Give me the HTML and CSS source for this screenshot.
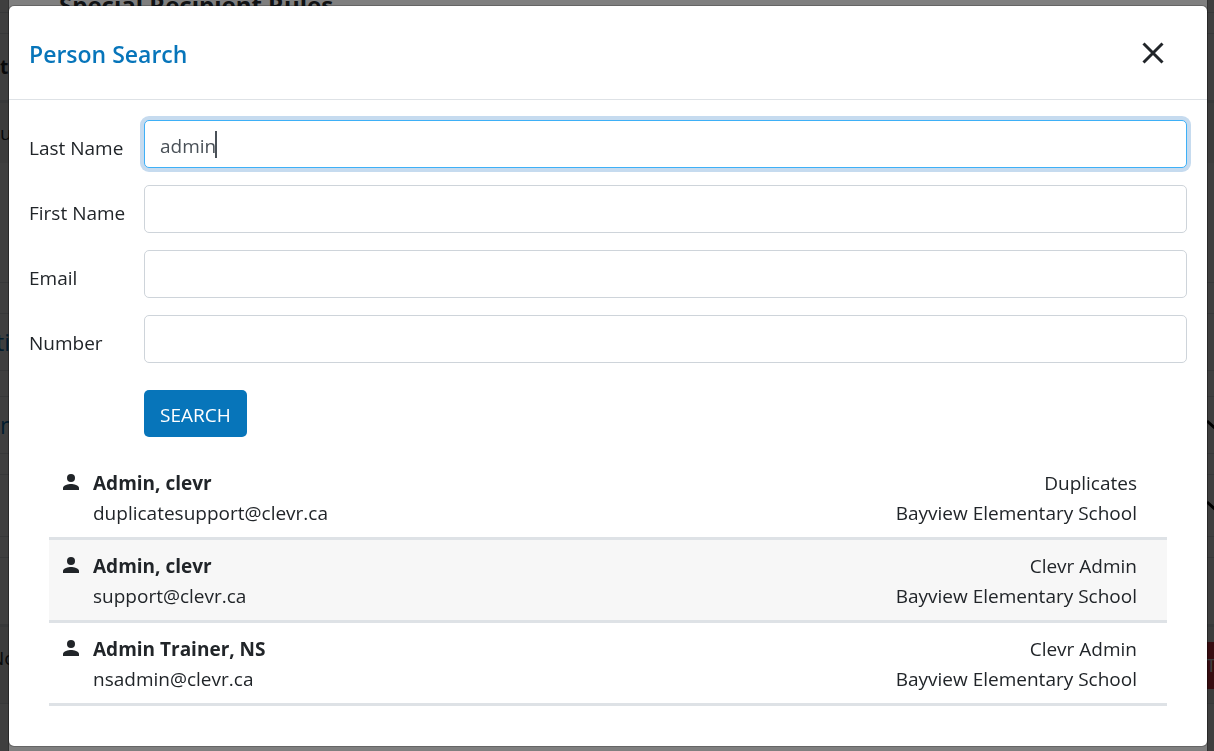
FILE: index.html
```html
<!DOCTYPE html>
<html lang="en">
<head>
	<meta charset="UTF-8">
	<title>Person Search</title>
	<link rel="stylesheet" href="styles.css">
</head>
<body>

	<!-- page behind the dialogs -->
	<div class="page" aria-hidden="true">
		<div class="row row-xs"></div>
		<div class="row row-sm"></div>
		<div class="row row-head"><b>t</b></div>
		<div class="row row-alt">u</div>
		<div class="row row-tall"></div>
		<div class="row row-md"></div>
		<div class="row row-link"><span class="cut-sm">ti</span></div>
		<div class="row row-gap"></div>
		<div class="row row-link"><span>n</span>
			<svg class="chevron" viewBox="0 0 14 14"><path d="M1 3l10 9"/></svg>
		</div>
		<div class="row row-sm"></div>
		<div class="row row-item">
			<svg class="chevron" viewBox="0 0 14 14"><path d="M1 3l10 9"/></svg>
		</div>
		<div class="row row-sm"></div>
		<div class="row row-head"></div>
		<div class="row row-foot"><span class="cut">No</span><span class="btn-red">T</span></div>
	</div>
	<div class="dimmed"></div>

	<!-- first dialog -->
	<div class="under" aria-hidden="true">
		<div class="under-title">Special Recipient Rules</div>
	</div>
	<div class="dimmed"></div>

	<!-- person search dialog -->
	<div class="modal-wrap">
		<div class="modal" role="dialog" aria-labelledby="modal-title">
			<div class="modal-header">
				<h1 id="modal-title">Person Search</h1>
				<button type="button" class="btn-close" aria-label="Close">
					<svg viewBox="0 0 22 22"><path d="M1.5 1.5l19 19M20.5 1.5l-19 19"/></svg>
				</button>
			</div>

			<form class="search-form">
				<div class="field">
					<label for="last-name">Last Name</label>
					<div class="control is-focused">
						<input type="text" id="last-name" value="admin">
						<span class="caret"></span>
					</div>
				</div>
				<div class="field">
					<label for="first-name">First Name</label>
					<div class="control"><input type="text" id="first-name"></div>
				</div>
				<div class="field">
					<label for="email">Email</label>
					<div class="control"><input type="text" id="email"></div>
				</div>
				<div class="field">
					<label for="number">Number</label>
					<div class="control"><input type="text" id="number"></div>
				</div>
				<button type="button" class="btn-search">SEARCH</button>
			</form>

			<ul class="results">
				<li>
					<svg class="person" viewBox="0 0 16 16"><circle cx="8" cy="4" r="4"/><path d="M0 16v-2c0-2.700 5.300-4 8-4s8 1.300 8 4v2z"/></svg>
					<div class="who"><b>Admin, clevr</b><span>duplicatesupport@clevr.ca</span></div>
					<div class="where"><span>Duplicates</span><span>Bayview Elementary School</span></div>
				</li>
				<li>
					<svg class="person" viewBox="0 0 16 16"><circle cx="8" cy="4" r="4"/><path d="M0 16v-2c0-2.700 5.300-4 8-4s8 1.300 8 4v2z"/></svg>
					<div class="who"><b>Admin, clevr</b><span>support@clevr.ca</span></div>
					<div class="where"><span>Clevr Admin</span><span>Bayview Elementary School</span></div>
				</li>
				<li>
					<svg class="person" viewBox="0 0 16 16"><circle cx="8" cy="4" r="4"/><path d="M0 16v-2c0-2.700 5.300-4 8-4s8 1.300 8 4v2z"/></svg>
					<div class="who"><b>Admin Trainer, NS</b><span>nsadmin@clevr.ca</span></div>
					<div class="where"><span>Clevr Admin</span><span>Bayview Elementary School</span></div>
				</li>
			</ul>
		</div>
	</div>

</body>
</html>
```
FILE: styles.css
```css
*{ box-sizing: border-box; }
body{
	margin: 0;
	overflow: hidden;
	font-family: "Open Sans", "Noto Sans", sans-serif;
	font-size: 19px;
	line-height: 30px;
	color: #212529;
}
h1, ul{ margin: 0; padding: 0; }
ul{ list-style: none; }
input, button{ font: inherit; }

/* page behind */
.page{
	position: fixed;
	top: 0;
	left: 0;
	width: 100%;
	height: 100%;
	overflow: hidden;
	background: #fff;
}
.row{
	display: flex;
	align-items: center;
	justify-content: space-between;
	border-bottom: 1px solid #dee2e6;
}
.row-xs{ height: 13px; }
.row-sm{ height: 21px; }
.row-gap{ height: 26px; }
.row-md{ height: 31px; }
.row-link{ height: 57px; font-size: 23px; color: #0775ba; }
.row-item{ height: 62px; }
.row-tall{ height: 120px; }
.row-head{ height: 69px; border-bottom-width: 3px; }
.row-alt{ height: 60px; background: #f2f2f2; border-bottom: 0; }
.row-foot{ height: 77px; background: #f2f2f2; }
.cut{ margin: 0 0 14px -10px; }
.cut-sm{ margin-left: -4px; }
.chevron{
	width: 14px;
	height: 14px;
	margin-left: auto;
	margin-right: -6px;
	fill: none;
	stroke: #000;
	stroke-width: 3;
}
.btn-red{
	width: 8px;
	height: 47px;
	line-height: 47px;
	overflow: hidden;
	background: #dc3545;
	color: #fff;
}

.dimmed{
	position: fixed;
	top: 0;
	left: 0;
	width: 100%;
	height: 100%;
	background: rgba(0, 0, 0, .5);
}

.under{
	position: fixed;
	top: 0;
	bottom: 0;
	left: 8px;
	right: 6px;
	padding: 0 50px;
	background: #fff;
	background-clip: padding-box;
	border: 1px solid rgba(0, 0, 0, .2);
	border-width: 0 1px;
}
.under-title{
	margin-top: -10px;
	font-size: 24px;
	font-weight: 700;
}

/* dialog */
.modal-wrap{
	position: relative;
	padding: 5px 6px 0 8px;
}
.modal{
	background: #fff;
	background-clip: padding-box;
	border: 1px solid rgba(0, 0, 0, .2);
	border-radius: 6px;
	padding-bottom: 40px;
}
.modal-header{
	display: flex;
	align-items: center;
	justify-content: space-between;
	height: 94px;
	padding: 0 40px 0 20px;
	border-bottom: 1px solid #dee2e6;
}
.modal-header h1{
	padding-top: 2px;
	font-size: 23px;
	font-weight: 600;
	color: #0775ba;
}
.btn-close{
	display: flex;
	padding: 3px;
	border: 0;
	background: none;
}
.btn-close svg{
	width: 22px;
	height: 22px;
	fill: none;
	stroke: #212529;
	stroke-width: 3;
}

.search-form{ padding: 20px 20px 0; }
.field{
	display: flex;
	margin-bottom: 17px;
}
.field label{
	width: 115px;
	padding-top: 13px;
}
.control{
	position: relative;
	flex: 1;
}
.control input{
	display: block;
	width: 100%;
	height: 48px;
	padding: 4px 15px 0;
	border: 1px solid #ced4da;
	border-radius: 5px;
	outline: 0;
	color: #495057;
	background: #fff;
}
.is-focused input{
	border-color: #3eb0f7;
	box-shadow: 0 0 0 4px #c6dbef;
}
.caret{
	position: absolute;
	left: 71px;
	top: 11px;
	width: 2px;
	height: 27px;
	background: #495057;
}
.btn-search{
	display: block;
	height: 47px;
	margin: 27px 0 0 115px;
	padding: 2px 16px 0;
	border: 0;
	border-radius: 5px;
	background: #0775ba;
	color: #fff;
	font-weight: 500;
}

.results{ padding: 20px 40px 0; }
.results li{
	display: flex;
	padding: 11px 30px 9px 14px;
	border-bottom: 3px solid #dee2e6;
}
.results li:nth-child(even){ background: #f7f7f7; }
.person{
	width: 16px;
	height: 16px;
	margin: 6px 14px 0 0;
	fill: #212529;
}
.who,
.where{
	display: flex;
	flex-direction: column;
}
.where{
	margin-left: auto;
	text-align: right;
}
```
